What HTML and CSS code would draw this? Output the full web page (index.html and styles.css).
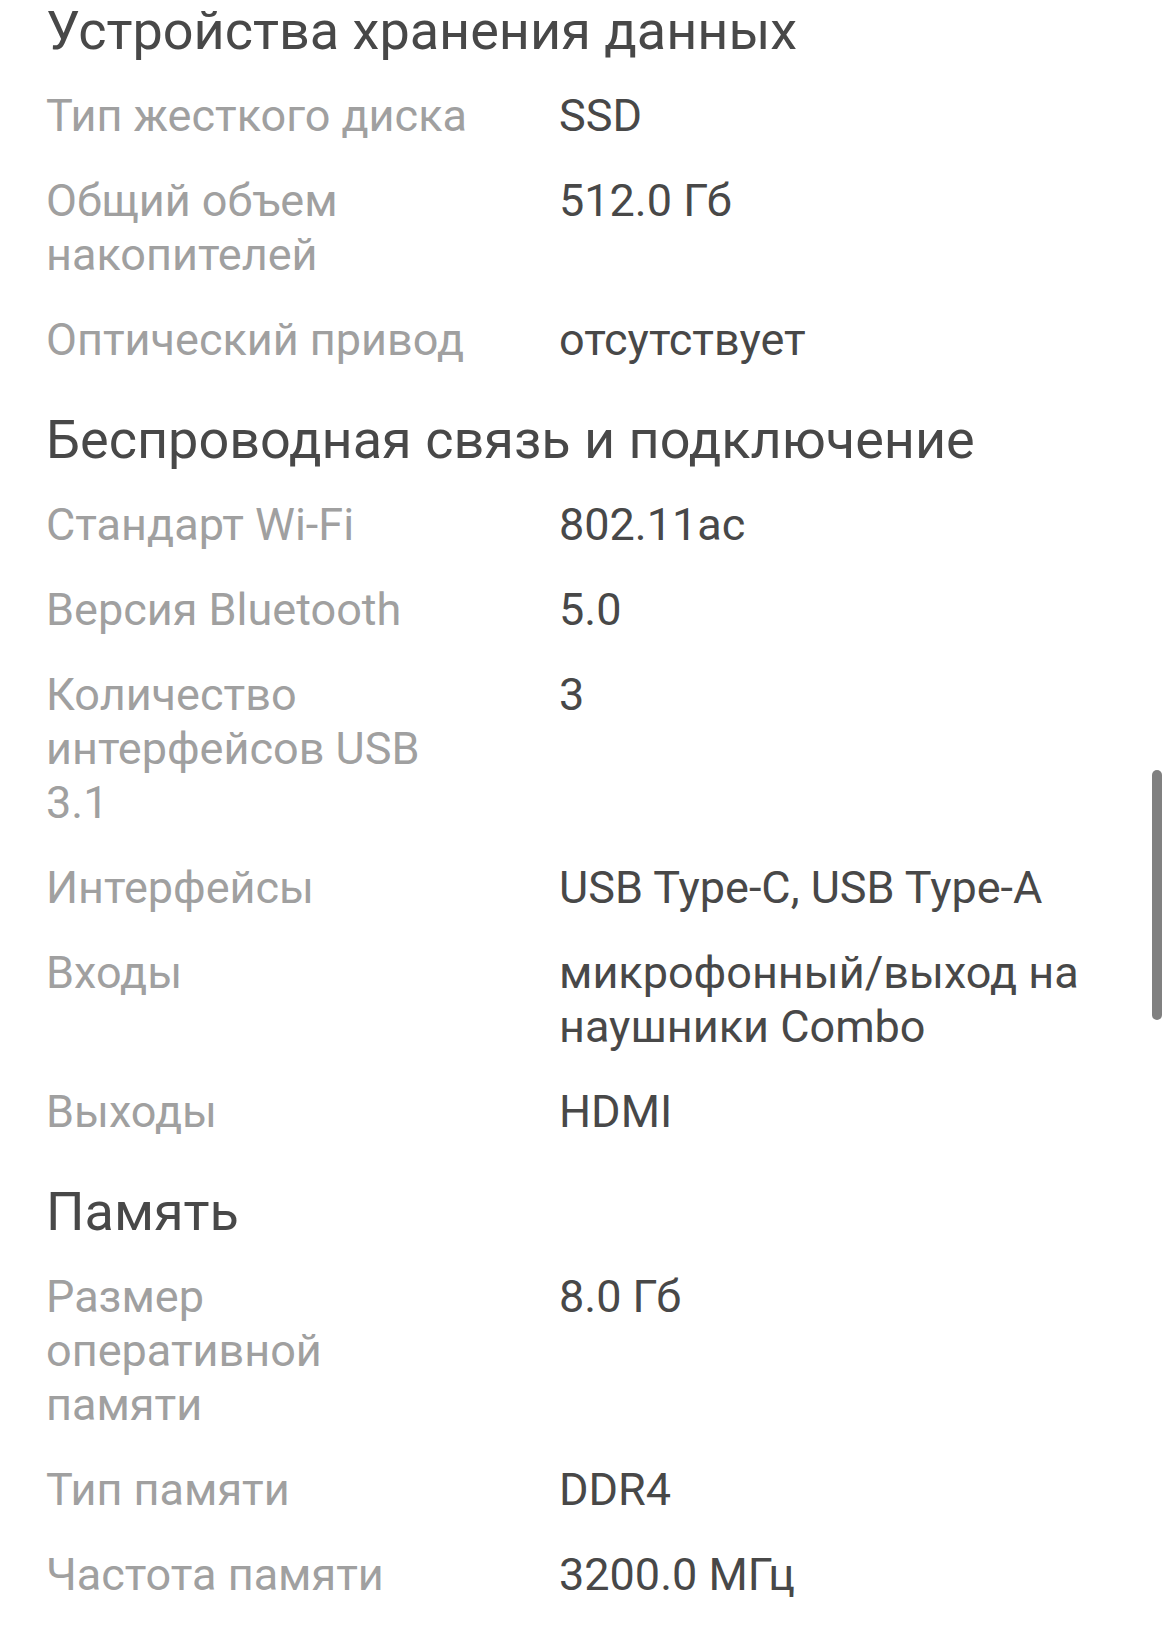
FILE: index.html
```html
<!DOCTYPE html>
<html lang="ru">
<head>
  <meta charset="UTF-8" />
  <meta name="viewport" content="width=device-width, initial-scale=1" />
  <title>Характеристики</title>
  <link rel="stylesheet" href="styles.css">
</head>
<body>

  <div class="specs">
    <!-- Storage -->
    <section class="group">
      <h2>Устройства хранения данных</h2>
      <div class="row"><div class="name">Тип жесткого диска</div><div class="value">SSD</div></div>
      <div class="row"><div class="name">Общий объем накопителей</div><div class="value">512.0 Гб</div></div>
      <div class="row"><div class="name">Оптический привод</div><div class="value">отсутствует</div></div>
    </section>

    <!-- Wireless -->
    <section class="group">
      <h2>Беспроводная связь и подключение</h2>
      <div class="row"><div class="name">Стандарт Wi-Fi</div><div class="value">802.11ac</div></div>
      <div class="row"><div class="name">Версия Bluetooth</div><div class="value">5.0</div></div>
      <div class="row"><div class="name">Количество интерфейсов USB 3.1</div><div class="value">3</div></div>
      <div class="row"><div class="name">Интерфейсы</div><div class="value">USB Type-C, USB Type-A</div></div>
      <div class="row"><div class="name">Входы</div><div class="value">микрофонный/выход на наушники Combo</div></div>
      <div class="row"><div class="name">Выходы</div><div class="value">HDMI</div></div>
    </section>

    <!-- Memory -->
    <section class="group">
      <h2>Память</h2>
      <div class="row"><div class="name">Размер оперативной памяти</div><div class="value">8.0 Гб</div></div>
      <div class="row"><div class="name">Тип памяти</div><div class="value">DDR4</div></div>
      <div class="row"><div class="name">Частота памяти</div><div class="value">3200.0 МГц</div></div>
    </section>
  </div>

  <div class="scrollbar"></div>

</body>
</html>
```

FILE: styles.css
```css
body {
  font-family: Roboto, 'Noto Sans', sans-serif;
  background: #ffffff;
  color: #484848;
  margin: 0;
  padding: 0 46px;
  overflow: hidden;
}
.specs {
  display: flex;
  flex-direction: column;
  gap: 42px;
}
.group {
  display: flex;
  flex-direction: column;
  gap: 31px;
}
h2 {
  font-size: 54px;
  font-weight: 400;
  line-height: 62px;
  margin: 0 0 -4px;
  color: #484848;
}
.row {
  display: grid;
  grid-template-columns: 428px 1fr;
  column-gap: 85px;
  font-size: 45px;
  line-height: 54px;
}
.name {
  color: #a0a0a0;
}
.value {
  color: #484848;
}
.scrollbar {
  position: absolute;
  top: 770px;
  right: 8px;
  width: 10px;
  height: 250px;
  border-radius: 5px;
  background: #808080;
}
```
